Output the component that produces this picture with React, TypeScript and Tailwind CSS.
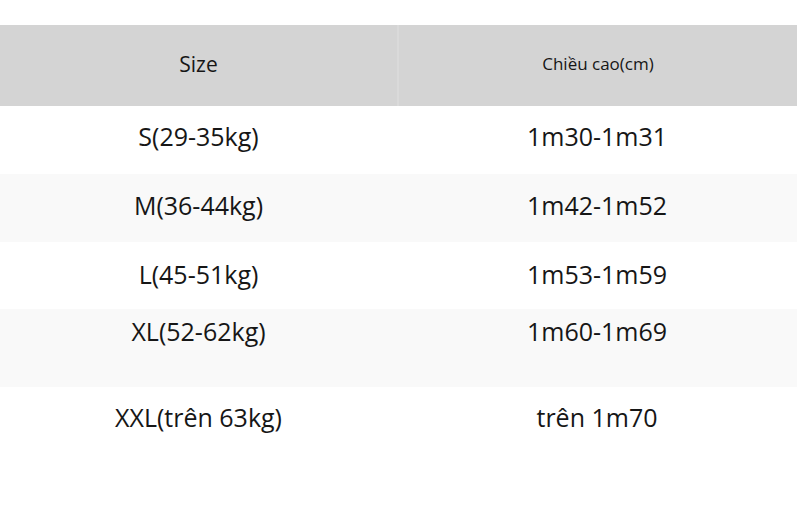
import React from "react";

const rows: { a: string; b: string; h: string; bg: string; align: string }[] = [
  { a: "S(29-35kg)", b: "1m30-1m31", h: "h-[68px]", bg: "bg-white", align: "items-center pb-[6px]" },
  { a: "M(36-44kg)", b: "1m42-1m52", h: "h-[68px]", bg: "bg-[#f9f9f9]", align: "items-center pb-[4px]" },
  { a: "L(45-51kg)", b: "1m53-1m59", h: "h-[67px]", bg: "bg-white", align: "items-center pb-[2px]" },
  { a: "XL(52-62kg)", b: "1m60-1m69", h: "h-[78px]", bg: "bg-[#f9f9f9]", align: "items-start pt-[4px]" },
  { a: "XXL(trên 63kg)", b: "trên 1m70", h: "h-[64px]", bg: "bg-white", align: "items-center pb-[2px]" },
];

export default function App() {
  return (
    <div
      className="w-[797px] h-[528px] bg-white text-[#161616] overflow-hidden"
      style={{ fontFamily: '"Open Sans", "Noto Sans", sans-serif' }}
    >
      <div className="h-[25px]" />
      <div className="flex h-[81px] bg-[#d4d4d4]">
        <div className="w-[397px] flex items-center justify-center text-[21px] pb-[2px]">Size</div>
        <div className="w-[2px] bg-[#dadada]" />
        <div className="flex-1 flex items-center justify-center text-[17px] pb-[4px]">Chiều cao(cm)</div>
      </div>
      {rows.map((r) => (
        <div key={r.a} className={`flex ${r.h} ${r.bg} text-[25px]`}>
          <div className={`w-[397px] flex justify-center ${r.align}`}>{r.a}</div>
          <div className={`flex-1 flex justify-center ${r.align}`}>{r.b}</div>
        </div>
      ))}
    </div>
  );
}
